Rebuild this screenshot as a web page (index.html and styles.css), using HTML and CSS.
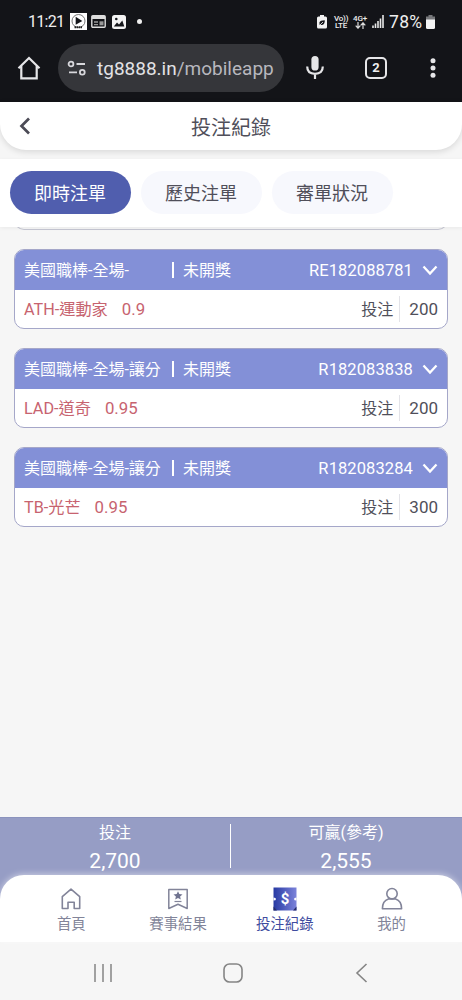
FILE: index.html
```html
<!DOCTYPE html>
<html lang="zh-Hant">
<head>
    <meta charset="UTF-8">
    <meta name="viewport" content="width=device-width, initial-scale=1.0">
    <title>投注紀錄</title>
    <link rel="stylesheet" href="styles.css">
</head>
<body>
    <div class="browser">
        <div class="status">
            <span class="time">11:21</span>
            <svg class="app-icon" width="17" height="17" viewBox="0 0 17 17"><path fill="#fff" d="M0 0h17v17H0z"/><circle cx="8.5" cy="8" r="6.5" fill="none" stroke="#555" stroke-width=".8"/><path d="M5.700 3.800v8L12.300 8z" fill="#15161a"/><path d="M4.5 14.2h8" stroke="#222" stroke-width="2" stroke-dasharray="1.5 .5"/></svg>
            <svg class="news-icon" width="15" height="13" viewBox="0 0 15 13"><rect x=".8" y=".8" width="13.4" height="11.4" rx="1" fill="none" stroke="#ddd" stroke-width="1.4"/><path d="M1 1h13v3H1z" fill="#ddd"/><path d="M3 7h4M3 9.7h4" stroke="#999" stroke-width="1.3"/><path d="M8.5 6.3h4v4h-4z" fill="#999"/></svg>
            <svg class="photo-icon" width="14" height="14" viewBox="0 0 14 14"><rect width="14" height="14" rx="2.5" fill="#f4f4f4"/><circle cx="4.3" cy="4" r="1.3" fill="#15161a"/><path d="M1.8 11.5 5 7.5l2 2 3.3-4 2 6z" fill="#15161a"/></svg>
            <span class="dot"></span>
            <div class="signals">
                <svg width="10" height="14" viewBox="0 0 10 14"><path d="M3 0h4v1.5h1.5Q10 1.5 10 3v9q0 1.5-1.5 1.5h-7Q0 13.500 0 12V3q0-1.500 1.500-1.500H3z" fill="#f2f2f2"/><path d="M2.500 9.800V7.500Q3 5.200 7.800 5.200 8 10 4.500 10z" fill="#15161a"/><path d="M2 11l4-4" stroke="#f2f2f2" stroke-width=".8"/></svg>
                <span class="tiny volte">Vo))<br>LTE</span>
                <span class="tiny">4G+<br><svg width="11" height="7" viewBox="0 0 11 7"><path d="M3 0v6M.7 3.700 3 6.200l2.300-2.500M8 7V1M5.700 3.300 8 .8l2.300 2.500" fill="none" stroke="#ddd" stroke-width="1.200"/></svg></span>
                <svg class="bars" width="12" height="13" viewBox="0 0 12 13"><path d="M1 13v-2.500M3.500 13V8.500M6 13V6M8.500 13V3.500M11 13V0" stroke="#e8e8e8" stroke-width="1.600"/></svg>
                <span class="percent">78%</span>
                <svg width="9" height="14" viewBox="0 0 9 14"><path d="M2.500 0h4v1.500H9V5H0V1.500h2.500z" fill="#77787b"/><path d="M0 4.500h9v8q0 1.500-1.500 1.500h-6Q0 14 0 12.500z" fill="#f4f4f4"/></svg>
            </div>
        </div>
        <div class="address">
            <svg class="home-btn" width="24" height="24" viewBox="0 0 24 24"><path d="M1.500 12.200 12 2l10.500 10.200M4.300 10v12.300h15.400V10" fill="none" stroke="#e6e6e8" stroke-width="2.200"/></svg>
            <div class="url">
                <svg width="20" height="16" viewBox="0 0 20 16" fill="none" stroke="#d8d8dc" stroke-width="1.800"><circle cx="4" cy="4" r="2.400"/><path d="M9.500 4H18M2 12.300h8"/><circle cx="15.300" cy="12.300" r="2.400"/></svg>
                <span>tg8888.in<i>/mobileapp</i></span>
            </div>
            <svg class="mic" width="18" height="24" viewBox="0 0 18 24"><rect x="5.400" y="0" width="7.200" height="14.500" rx="3.600" fill="#e6e6e8"/><path d="M1.200 10.500q0 7.300 7.800 7.300t7.800-7.300M9 17.800V23" fill="none" stroke="#e6e6e8" stroke-width="2.200"/></svg>
            <span class="tab-count">2</span>
            <svg class="more" width="6" height="20" viewBox="0 0 6 20" fill="#e6e6e8"><circle cx="3" cy="2.700" r="2.500"/><circle cx="3" cy="10" r="2.500"/><circle cx="3" cy="17.300" r="2.500"/></svg>
        </div>
    </div>

    <div class="title-bar">
        <svg class="back" width="12" height="18" viewBox="0 0 12 18"><path d="M10 1.500 2.500 9l7.500 7.500" fill="none" stroke="#4c4b56" stroke-width="2.700"/></svg>
        <h1>投注紀錄</h1>
    </div>

    <div class="tabs">
        <a class="tab active">即時注單</a>
        <a class="tab">歷史注單</a>
        <a class="tab">審單狀況</a>
    </div>

    <div class="list">
        <div class="previous"></div>
        <div class="card">
            <div class="card-head">
                <span class="game">美國職棒-全場-</span>
                <span class="state">未開獎</span>
                <span class="number">RE182088781</span>
                <svg width="16" height="11" viewBox="0 0 16 11"><path d="M1.500 1.500 8 8.500l6.500-7" fill="none" stroke="#fff" stroke-width="2.300"/></svg>
            </div>
            <div class="card-body">
                <span class="team">ATH-運動家</span><span class="odds">0.9</span>
                <span class="label">投注</span><span class="amount">200</span>
            </div>
        </div>
        <div class="card">
            <div class="card-head">
                <span class="game">美國職棒-全場-讓分</span>
                <span class="state">未開獎</span>
                <span class="number">R182083838</span>
                <svg width="16" height="11" viewBox="0 0 16 11"><path d="M1.500 1.500 8 8.500l6.500-7" fill="none" stroke="#fff" stroke-width="2.300"/></svg>
            </div>
            <div class="card-body">
                <span class="team">LAD-道奇</span><span class="odds">0.95</span>
                <span class="label">投注</span><span class="amount">200</span>
            </div>
        </div>
        <div class="card">
            <div class="card-head">
                <span class="game">美國職棒-全場-讓分</span>
                <span class="state">未開獎</span>
                <span class="number">R182083284</span>
                <svg width="16" height="11" viewBox="0 0 16 11"><path d="M1.500 1.500 8 8.500l6.500-7" fill="none" stroke="#fff" stroke-width="2.300"/></svg>
            </div>
            <div class="card-body">
                <span class="team">TB-光芒</span><span class="odds">0.95</span>
                <span class="label">投注</span><span class="amount">300</span>
            </div>
        </div>
    </div>

    <div class="bottom">
        <div class="totals">
            <div class="total"><span>投注</span><b>2,700</b></div>
            <div class="line"></div>
            <div class="total"><span>可贏(參考)</span><b>2,555</b></div>
        </div>
        <div class="menu">
            <a class="item">
                <svg width="24" height="24" viewBox="0 0 24 24"><path d="M3.300 21.500V9.700L12 2.200l8.700 7.500v11.800h-5.500v-6.200H9v6.200z" fill="none" stroke="#828499" stroke-width="1.600" stroke-linejoin="round"/></svg>
                首頁
            </a>
            <a class="item">
                <svg width="24" height="24" viewBox="0 0 24 24"><path d="M2.800 2.500h18.400v19L12 17.300l-9.200 4.200z" fill="none" stroke="#828499" stroke-width="1.500" stroke-linejoin="round"/><path d="m12 4.200 1.300 2.900 3.200.3-2.400 2.100.7 3.100-2.800-1.700-2.800 1.700.7-3.100-2.400-2.100 3.200-.3z" fill="#70738f"/><path d="M8.500 14.500h7" stroke="#828499" stroke-width="1.200"/></svg>
                賽事結果
            </a>
            <a class="item current">
                <svg width="24" height="24" viewBox="0 0 24 24"><defs><linearGradient id="ticket"><stop offset="0" stop-color="#2739a3"/><stop offset="1" stop-color="#7c83da"/></linearGradient></defs><path d="M.5.500h23v23H.5z" fill="url(#ticket)"/><path d="M.5 19.500v4H4zM23.500 19.500v4H20z" fill="#242b68"/><path d="M.5 10.500q2.500 0 2.500 1.500t-2.500 1.500zM23.500 10.500q-2.500 0-2.500 1.500t2.500 1.500z" fill="#fff"/><text x="12" y="17.300" text-anchor="middle" class="dollar">$</text></svg>
                投注紀錄
            </a>
            <a class="item">
                <svg width="24" height="24" viewBox="0 0 24 24" fill="none" stroke="#828499" stroke-width="1.600"><circle cx="12" cy="6.700" r="5.200"/><path d="M2.400 21.700q0-8 6-9.800h7.200q6 1.800 6 9.800z" stroke-linejoin="round"/></svg>
                我的
            </a>
        </div>
    </div>

    <div class="system">
        <svg width="20" height="20" viewBox="0 0 20 20"><path d="M2 1v18M10 1v18M18 1v18" stroke="#858585" stroke-width="1.500"/></svg>
        <svg width="20" height="20" viewBox="0 0 20 20"><rect x="1" y="1" width="18" height="18" rx="5.500" fill="none" stroke="#858585" stroke-width="1.600"/></svg>
        <svg width="20" height="20" viewBox="0 0 20 20"><path d="M14.500 1 5 10l9.500 9" fill="none" stroke="#858585" stroke-width="1.600"/></svg>
    </div>
</body>
</html>
```
FILE: styles.css
```css
* {
    margin: 0;
    padding: 0;
    box-sizing: border-box;
}
body {
    display: flex;
    flex-direction: column;
    height: 1000px;
    overflow: hidden;
    font-family: Roboto, "Noto Sans CJK TC", sans-serif;
    background-color: #f6f6f6;
    color: #504f5a;
}
svg {
    flex: none;
}
.browser {
    height: 102px;
    background-color: #131418;
    color: #eee;
}
.status {
    display: flex;
    align-items: center;
    height: 43px;
    padding: 0 27px 0 28px;
}
.time {
    width: 36px;
    font-size: 16px;
    letter-spacing: -0.7px;
}
.app-icon {
    margin-left: 6px;
}
.news-icon {
    margin-left: 4px;
}
.photo-icon {
    margin-left: 6px;
}
.dot {
    width: 5px;
    height: 5px;
    margin-left: 11px;
    border-radius: 50%;
    background-color: #eee;
}
.signals {
    display: flex;
    align-items: center;
    margin-left: auto;
}
.tiny {
    width: 14px;
    margin-left: 5px;
    font-size: 8px;
    font-weight: 500;
    line-height: 7px;
    letter-spacing: -0.2px;
    text-align: center;
    white-space: nowrap;
}
.tiny svg {
    display: block;
    margin: auto;
}
.volte {
    margin-left: 7px;
}
.bars {
    margin-left: 5px;
}
.percent {
    width: 35px;
    margin: 0 2px 0 5px;
    font-size: 17.5px;
    letter-spacing: 0.3px;
}
.address {
    display: flex;
    align-items: center;
    height: 48px;
    margin-top: 1px;
    padding-left: 17px;
}
.url {
    display: flex;
    align-items: center;
    width: 226px;
    height: 48px;
    margin-left: 17px;
    padding-left: 9px;
    border-radius: 24px;
    background-color: #35363a;
    font-size: 19px;
    color: #e2e2e5;
}
.url span {
    margin-left: 10px;
}
.url i {
    font-style: normal;
    color: #b8b8be;
}
.mic {
    margin-left: 22px;
}
.tab-count {
    width: 22px;
    height: 22px;
    margin-left: 41px;
    border: 2px solid #e6e6e8;
    border-radius: 5px;
    font-size: 13px;
    font-weight: bold;
    line-height: 18px;
    text-align: center;
}
.more {
    margin-left: 43px;
}
.title-bar {
    display: flex;
    align-items: center;
    height: 48px;
    padding-left: 19px;
    border-radius: 0 0 26px 26px;
    background-color: #fff;
    box-shadow: 0 2px 6px rgba(0, 0, 0, 0.12);
}
.title-bar h1 {
    flex: 1;
    padding-right: 31px;
    font-size: 20px;
    font-weight: normal;
    text-align: center;
}
.tabs {
    display: flex;
    gap: 10px;
    height: 68px;
    margin-top: 9px;
    padding: 12px 10px;
    background-color: #fff;
    box-shadow: 0 1px 4px rgba(0, 0, 0, 0.06);
    z-index: 1;
}
.tab {
    width: 121px;
    height: 43px;
    padding-right: 1px;
    border-radius: 22px;
    background-color: #f7f8fd;
    font-size: 18px;
    line-height: 45px;
    text-align: center;
}
.tab.active {
    background-color: #505eae;
    color: #fff;
}
.list {
    flex: 1;
    padding: 0 14px;
}
.previous {
    height: 10px;
    margin: -7px 0 19px;
    border: 1px solid #c5c6d2;
    border-top: none;
    border-radius: 0 0 10px 10px;
}
.card {
    height: 80px;
    margin-bottom: 19px;
    border: 1px solid #a5a7c9;
    border-radius: 10px;
    background-color: #fff;
    overflow: hidden;
    font-size: 16px;
}
.card-head {
    display: flex;
    align-items: center;
    height: 40px;
    padding: 0 9px;
    background-color: #8390d7;
    color: #fff;
}
.game {
    width: 148px;
    padding-top: 2px;
    line-height: 20px;
    white-space: nowrap;
}
.state {
    height: 16px;
    padding-left: 9px;
    line-height: 18px;
    border-left: 2px solid #fff;
}
.number {
    margin-left: auto;
    margin-right: 9px;
    font-size: 16.5px;
    letter-spacing: 0.1px;
}
.card-body {
    display: flex;
    align-items: center;
    height: 38px;
    padding: 0 9px;
    line-height: 20px;
}
.team, .odds {
    color: #c7636f;
}
.team {
    padding-top: 1px;
    font-size: 16.2px;
}
.odds {
    margin-left: 14px;
    font-size: 16.8px;
}
.label {
    margin-left: auto;
    padding-top: 1px;
}
.amount {
    margin-left: 6px;
    padding-left: 9px;
    border-left: 1px solid #e3e3e8;
    font-size: 17px;
    line-height: 26px;
}
.bottom {
    background-color: #969dc5;
}
.totals {
    display: flex;
    height: 58px;
    padding-right: 1px;
    border-top: 1px solid #8b93bd;
    color: #fff;
}
.total {
    flex: 1;
    display: flex;
    flex-direction: column;
    align-items: center;
    font-size: 16px;
    line-height: 29px;
}
.total b {
    font-size: 21px;
    font-weight: normal;
    line-height: 28px;
}
.line {
    width: 1px;
    height: 44px;
    margin-top: 6px;
    background-color: #fff;
}
.menu {
    display: flex;
    height: 67px;
    padding: 12px 17px 0 18px;
    border-radius: 24px 24px 0 0;
    background-color: #fff;
    box-shadow: 0 -1px 6px rgba(255, 255, 255, 0.5);
}
.item {
    flex: 1;
    display: flex;
    flex-direction: column;
    align-items: center;
    gap: 3px;
    font-size: 14.4px;
    line-height: 21px;
    color: #828499;
}
.item.current {
    color: #3f4ca0;
}
.dollar {
    font-size: 15px;
    font-weight: bold;
    fill: #fff;
}
.system {
    display: flex;
    justify-content: space-between;
    align-items: center;
    height: 58px;
    padding: 3px 90px 0 93px;
}
```
